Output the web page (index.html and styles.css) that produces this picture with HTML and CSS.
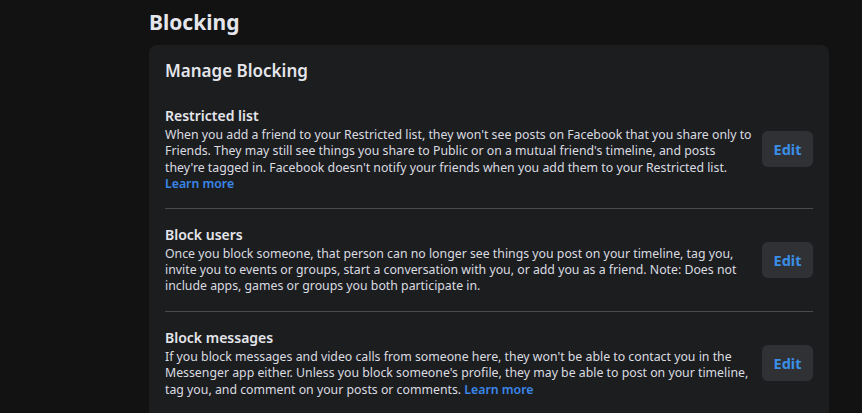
FILE: index.html
```html
<!DOCTYPE html>
<html lang="en">
<head>
<meta charset="utf-8">
<title>Blocking</title>
<link rel="stylesheet" href="styles.css">
</head>
<body>
<div class="page">
  <h1 class="page-title">Blocking</h1>
  <div class="card">
    <h2 class="card-title">Manage Blocking</h2>
    <div class="row">
      <div class="row-text">
        <h3 class="row-title">Restricted list</h3>
        <p class="row-desc">When you add a friend to your Restricted list, they won't see posts on Facebook that you share only to Friends. They may still see things you share to Public or on a mutual friend's timeline, and posts they're tagged in. Facebook doesn't notify your friends when you add them to your Restricted list. <a class="link link-block" href="#">Learn more</a></p>
      </div>
      <button class="edit-btn">Edit</button>
    </div>
    <div class="row">
      <div class="row-text">
        <h3 class="row-title">Block users</h3>
        <p class="row-desc">Once you block someone, that person can no longer see things you post on your timeline, tag you, invite you to events or groups, start a conversation with you, or add you as a friend. Note: Does not include apps, games or groups you both participate in.</p>
      </div>
      <button class="edit-btn">Edit</button>
    </div>
    <div class="row">
      <div class="row-text">
        <h3 class="row-title">Block messages</h3>
        <p class="row-desc">If you block messages and video calls from someone here, they won't be able to contact you in the Messenger app either. Unless you block someone's profile, they may be able to post on your timeline, tag you, and comment on your posts or comments. <a class="link" href="#">Learn more</a></p>
      </div>
      <button class="edit-btn">Edit</button>
    </div>
  </div>
</div>
</body>
</html>
```
FILE: styles.css
```css
html, body {
  margin: 0;
  padding: 0;
  background: #121213;
  font-family: "Noto Sans", "Open Sans", sans-serif;
  color: #e4e6eb;
  overflow: hidden;
}
.page {
  width: 680px;
  margin-left: 149px;
  padding-top: 9px;
}
.page-title {
  margin: 0;
  font-size: 21px;
  line-height: 26px;
  font-weight: 700;
  color: #e4e6eb;
  height: 36px;
}
.card {
  background: #1c1d1f;
  border-radius: 8px;
  padding: 14px 16px 0 16px;
  min-height: 400px;
}
.card-title {
  margin: 0;
  font-size: 17px;
  line-height: 24px;
  font-weight: 600;
  padding-bottom: 23px;
}
.row {
  display: flex;
  align-items: center;
  gap: 9px;
  padding: 0 0 16px 0;
  border-bottom: 1px solid #4a4b4d;
  margin-bottom: 16px;
}
.row:first-of-type {
  padding-bottom: 15px;
}
.row:last-child {
  border-bottom: none;
}
.row-text {
  flex: 1;
}
.row-title {
  margin: 0 0 1px 0;
  font-size: 14px;
  line-height: 20px;
  font-weight: 600;
  color: #e4e6eb;
}
.row-desc {
  margin: 0;
  font-size: 12.3px;
  line-height: 16.4px;
  color: #dadce0;
}
.link {
  display: inline-block;
  line-height: 14px;
  color: #3a86e8;
  font-weight: 600;
  text-decoration: none;
}
.link-block {
  display: block;
  line-height: 16.4px;
}
.edit-btn {
  flex: none;
  width: 51px;
  height: 36px;
  border: none;
  border-radius: 6px;
  background: #303134;
  color: #3a8ee6;
  font-family: inherit;
  font-size: 14.5px;
  font-weight: 700;
  padding: 0;
}
```
